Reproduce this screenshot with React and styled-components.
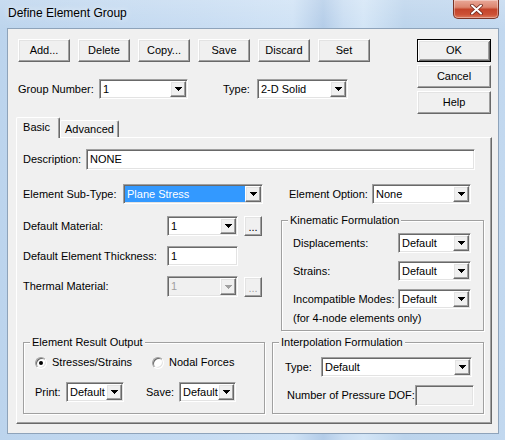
import React from 'react';
import styled, { createGlobalStyle, css } from 'styled-components';

const Global = createGlobalStyle`
  html, body { margin: 0; padding: 0; }
  body {
    width: 505px; height: 440px; overflow: hidden;
    background: #bcd4ec;
    font-family: "Liberation Sans", Arial, sans-serif;
  }
`;

const sunken = css`
  border: 1px solid;
  border-color: #a0a0a0 #ffffff #ffffff #a0a0a0;
  box-shadow: inset 1px 1px 0 #696969, inset -1px -1px 0 #e3e3e3;
`;

const raised = css`
  border: 1px solid;
  border-color: #ffffff #696969 #696969 #ffffff;
  box-shadow: inset -1px -1px 0 #a0a0a0, inset 1px 1px 0 #e3e3e3;
`;

const Window = styled.div`
  width: 505px;
  height: 440px;
  box-sizing: border-box;
  display: flex;
  flex-direction: column;
  background:
    linear-gradient(180deg, rgba(255,255,255,0.18), rgba(255,255,255,0) 30px),
    linear-gradient(90deg, #bcd4ed 0%, #c7dcf2 40%, #cfe2f5 58%, #b3cce8 64%, #c9ddf2 68%, #d3e5f6 72%, #bcd4ec 80%, #c2d8ef 100%);
  font-family: "Liberation Sans", Arial, sans-serif;
  font-size: 11px;
  line-height: 13px;
  color: #000;
`;

const TitleBar = styled.div`
  height: 28px;
  flex: none;
  display: flex;
  align-items: flex-start;
`;

const Title = styled.div`
  margin: 6px 0 0 8px;
  font-size: 12px;
  line-height: 15px;
  color: #000;
  text-shadow: 0 0 6px rgba(255,255,255,0.9);
`;

const CloseButton = styled.div`
  margin-left: auto;
  margin-right: 6px;
  width: 46px;
  height: 19px;
  box-sizing: border-box;
  border: 1px solid #7a3426;
  border-top: none;
  border-radius: 0 0 5px 5px;
  background: linear-gradient(180deg, #e9a898 0%, #dc8670 40%, #c4442a 52%, #cc5035 80%, #dc7a5c 100%);
  box-shadow: inset 0 0 0 1px rgba(255,255,255,0.35);
  display: flex;
  align-items: center;
  justify-content: center;
`;

const Client = styled.div`
  flex: 1;
  margin: 0 6px 6px 7px;
  box-sizing: border-box;
  background: #f0f0f0;
  border: 1px solid #8ea3ba;
  display: flex;
  flex-direction: column;
`;

const TopSection = styled.div`
  flex: none;
  display: flex;
  padding: 10px 7px 0 10px;
`;

const LeftCol = styled.div`
  display: flex;
  flex-direction: column;
`;

const ButtonRow = styled.div`
  display: flex;
  gap: 8px;
`;

const GroupRow = styled.div`
  display: flex;
  align-items: center;
  margin-top: 17px;
`;

const RightCol = styled.div`
  margin-left: auto;
  display: flex;
  flex-direction: column;
  gap: 3px;
`;

const PushButton = styled.div`
  box-sizing: border-box;
  width: ${p => p.$w || 52}px;
  height: 23px;
  background: #f0f0f0;
  display: flex;
  align-items: center;
  justify-content: center;
  ${raised}
  ${p => p.$default && css`
    border: 1px solid #000;
    box-shadow: inset 1px 1px 0 #fff, inset -1px -1px 0 #696969, inset 2px 2px 0 #e3e3e3, inset -2px -2px 0 #a0a0a0;
  `}
`;

const Label = styled.div`
  flex: none;
  width: ${p => (p.$w ? `${p.$w}px` : 'auto')};
  margin-left: ${p => p.$ml || 0}px;
  white-space: nowrap;
  color: ${p => (p.$disabled ? '#a0a0a0' : '#000')};
`;

const ComboBox = styled.div`
  box-sizing: border-box;
  flex: none;
  width: ${p => p.$w}px;
  height: ${p => p.$h || 20}px;
  padding: 1px;
  display: flex;
  background: ${p => (p.$disabled ? '#f0f0f0' : '#fff')};
  ${sunken}
`;

const ComboText = styled.div`
  flex: 1;
  display: flex;
  align-items: center;
  padding-left: 2px;
  white-space: nowrap;
  overflow: hidden;
  background: ${p => (p.$selected ? '#3399ff' : 'transparent')};
  color: ${p => (p.$selected ? '#fff' : p.$disabled ? '#a0a0a0' : '#000')};
`;

const DropButton = styled.div`
  box-sizing: border-box;
  flex: none;
  width: 16px;
  background: #f0f0f0;
  display: flex;
  align-items: center;
  justify-content: center;
  ${raised}
`;

const TextBox = styled.div`
  box-sizing: border-box;
  flex: ${p => (p.$w ? 'none' : '1')};
  width: ${p => (p.$w ? `${p.$w}px` : 'auto')};
  height: ${p => p.$h || 21}px;
  padding: 0 3px;
  display: flex;
  align-items: center;
  background: ${p => (p.$disabled ? '#f0f0f0' : '#fff')};
  margin-right: ${p => p.$mr || 0}px;
  ${sunken}
`;

const DotsButton = styled.div`
  box-sizing: border-box;
  flex: none;
  width: 18px;
  height: 20px;
  margin-left: 6px;
  background: #f0f0f0;
  display: flex;
  align-items: flex-end;
  justify-content: center;
  padding-bottom: 4px;
  line-height: 8px;
  color: ${p => (p.$disabled ? '#a0a0a0' : '#000')};
  ${raised}
`;

const TabStrip = styled.div`
  flex: none;
  height: 21px;
  margin: 3px 6px 0 8px;
  display: flex;
  align-items: flex-start;
  position: relative;
  z-index: 1;
`;

const Tab = styled.div`
  box-sizing: border-box;
  width: ${p => p.$w}px;
  height: ${p => (p.$active ? 21 : 17)}px;
  margin-top: ${p => (p.$active ? 0 : 3)}px;
  background: #f0f0f0;
  border-left: 1px solid #fff;
  border-top: 1px solid #fff;
  border-right: 1px solid #696969;
  border-radius: 2px 2px 0 0;
  box-shadow: inset -1px 0 0 #a0a0a0;
  display: flex;
  align-items: center;
  justify-content: center;
  padding-bottom: ${p => (p.$active ? 2 : 0)}px;
  padding-right: ${p => (p.$active ? 3 : 0)}px;
`;

const Panel = styled.div`
  flex: 1;
  margin: -1px 6px 9px 8px;
  box-sizing: border-box;
  border: 1px solid;
  border-color: #fff #696969 #696969 #fff;
  box-shadow: inset -1px -1px 0 #a0a0a0;
  padding: 11px 7px 0 6px;
  display: flex;
  flex-direction: column;
`;

const Row = styled.div`
  display: flex;
  align-items: center;
  margin-top: ${p => p.$mt || 0}px;
`;

const MiddleRow = styled.div`
  display: flex;
  align-items: flex-start;
  margin-top: 12px;
`;

const FieldColumn = styled.div`
  display: flex;
  flex-direction: column;
  gap: 10px;
`;

const GroupBox = styled.div`
  position: relative;
  box-sizing: border-box;
  flex: none;
  width: ${p => p.$w}px;
  height: ${p => p.$h}px;
  margin-left: ${p => (p.$right ? 'auto' : '0')};
  margin-top: ${p => p.$mt || 0}px;
  border: 1px solid #a0a0a0;
  box-shadow: 1px 1px 0 #fff, inset 1px 1px 0 #fff;
  padding: ${p => p.$pad};
  display: flex;
  flex-direction: column;
`;

const GroupTitle = styled.div`
  position: absolute;
  top: -7px;
  left: 6px;
  padding: 0 2px;
  background: #f0f0f0;
  white-space: nowrap;
`;

const GroupLine = styled.div`
  display: flex;
  align-items: center;
  justify-content: ${p => (p.$spread ? 'space-between' : 'flex-start')};
  margin-top: ${p => p.$mt || 0}px;
`;

const Note = styled.div`
  margin-top: 3px;
  white-space: nowrap;
`;

const BottomRow = styled.div`
  display: flex;
  margin-top: 11px;
`;

const RadioItem = styled.div`
  display: flex;
  align-items: center;
  gap: 5px;
  width: ${p => (p.$w ? `${p.$w}px` : 'auto')};
  white-space: nowrap;
`;

const RadioCircle = styled.span`
  box-sizing: border-box;
  width: 12px;
  height: 12px;
  border-radius: 50%;
  border: 1px solid;
  border-color: #a0a0a0 #fff #fff #a0a0a0;
  box-shadow: inset 1px 1px 0 #696969, inset -1px -1px 0 #e3e3e3;
  background: #fff;
  display: flex;
  align-items: center;
  justify-content: center;
  &::after {
    content: '';
    width: 4px;
    height: 4px;
    border-radius: 50%;
    background: ${p => (p.$checked ? '#000' : 'transparent')};
  }
`;

const Arrow = ({ disabled }) => (
  <svg width="7" height="4" viewBox="0 0 7 4" shapeRendering="crispEdges">
    <path d="M0 0h7v1H0zM1 1h5v1H1zM2 2h3v1H2zM3 3h1v1H3z" fill={disabled ? '#a0a0a0' : '#000'} />
  </svg>
);

const CloseGlyph = () => (
  <svg width="13" height="11" viewBox="0 0 13 11">
    <path d="M2 1.5 L11 9.5 M11 1.5 L2 9.5" stroke="#6b2418" strokeWidth="3.6" strokeLinecap="round" />
    <path d="M2 1.5 L11 9.5 M11 1.5 L2 9.5" stroke="#fff" strokeWidth="2" strokeLinecap="round" />
  </svg>
);

const Combo = ({ w, h, value, selected, disabled }) => (
  <ComboBox $w={w} $h={h} $disabled={disabled}>
    <ComboText $selected={selected} $disabled={disabled}>{value}</ComboText>
    <DropButton><Arrow disabled={disabled} /></DropButton>
  </ComboBox>
);

export default function App() {
  return (
    <>
      <Global />
      <Window>
        <TitleBar>
          <Title>Define Element Group</Title>
          <CloseButton><CloseGlyph /></CloseButton>
        </TitleBar>
        <Client>
          <TopSection>
            <LeftCol>
              <ButtonRow>
                {['Add...', 'Delete', 'Copy...', 'Save', 'Discard', 'Set'].map(t => (
                  <PushButton key={t}>{t}</PushButton>
                ))}
              </ButtonRow>
              <GroupRow>
                <Label $w={81}>Group Number:</Label>
                <Combo w={89} value="1" />
                <Label $w={34} $ml={35}>Type:</Label>
                <Combo w={91} value="2-D Solid" />
              </GroupRow>
            </LeftCol>
            <RightCol>
              <PushButton $default $w={74}>OK</PushButton>
              <PushButton $w={74}>Cancel</PushButton>
              <PushButton $w={74}>Help</PushButton>
            </RightCol>
          </TopSection>

          <TabStrip>
            <Tab $active $w={44}>Basic</Tab>
            <Tab $w={59}>Advanced</Tab>
          </TabStrip>

          <Panel>
            <Row>
              <Label $w={63}>Description:</Label>
              <TextBox $mr={9}>NONE</TextBox>
            </Row>

            <Row $mt={14}>
              <Label $w={100}>Element Sub-Type:</Label>
              <Combo w={140} value="Plane Stress" selected />
              <Label $w={83} $ml={26}>Element Option:</Label>
              <Combo w={99} value="None" />
            </Row>

            <MiddleRow>
              <FieldColumn>
                <Row>
                  <Label $w={144}>Default Material:</Label>
                  <Combo w={71} value="1" />
                  <DotsButton>...</DotsButton>
                </Row>
                <Row>
                  <Label $w={144}>Default Element Thickness:</Label>
                  <TextBox $w={71} $h={20}>1</TextBox>
                </Row>
                <Row>
                  <Label $w={144}>Thermal Material:</Label>
                  <Combo w={71} h={21} value="1" disabled />
                  <DotsButton $disabled>...</DotsButton>
                </Row>
              </FieldColumn>

              <GroupBox $right $w={203} $h={111} $mt={4} $pad="12px 12px 0 11px">
                <GroupTitle>Kinematic Formulation</GroupTitle>
                <GroupLine $spread>
                  <Label>Displacements:</Label>
                  <Combo w={73} value="Default" />
                </GroupLine>
                <GroupLine $spread $mt={8}>
                  <Label>Strains:</Label>
                  <Combo w={73} value="Default" />
                </GroupLine>
                <GroupLine $spread $mt={8}>
                  <Label>Incompatible Modes:</Label>
                  <Combo w={73} value="Default" />
                </GroupLine>
                <Note>(for 4-node elements only)</Note>
              </GroupBox>
            </MiddleRow>

            <BottomRow>
              <GroupBox $w={242} $h={72} $pad="13px 8px 0 11px">
                <GroupTitle>Element Result Output</GroupTitle>
                <GroupLine>
                  <RadioItem $w={117}><RadioCircle $checked />Stresses/Strains</RadioItem>
                  <RadioItem><RadioCircle />Nodal Forces</RadioItem>
                </GroupLine>
                <GroupLine $mt={13}>
                  <Label $w={31}>Print:</Label>
                  <Combo w={58} value="Default" />
                  <Label $w={33} $ml={22}>Save:</Label>
                  <Combo w={57} value="Default" />
                </GroupLine>
              </GroupBox>

              <GroupBox $right $w={212} $h={72} $pad="14px 11px 0 12px">
                <GroupTitle>Interpolation Formulation</GroupTitle>
                <GroupLine>
                  <Label $w={36}>Type:</Label>
                  <Combo w={151} value="Default" />
                </GroupLine>
                <GroupLine $spread $mt={8}>
                  <Label $ml={2}>Number of Pressure DOF:</Label>
                  <TextBox $w={59} $disabled />
                </GroupLine>
              </GroupBox>
            </BottomRow>
          </Panel>
        </Client>
      </Window>
    </>
  );
}
